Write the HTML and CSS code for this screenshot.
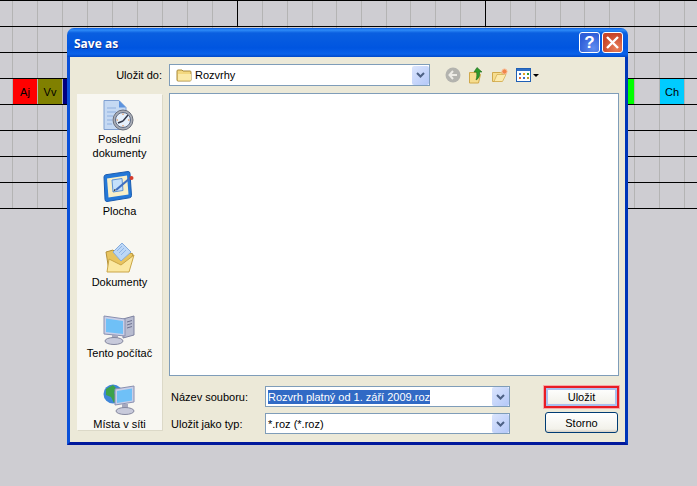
FILE: index.html
```html
<!DOCTYPE html>
<html lang="cs">
<head>
  <meta charset="UTF-8">
  <title>Save as</title>
  <link rel="stylesheet" href="styles.css">
</head>
<body>
  <div class="timetable">
    <div class="row row-head"></div>
    <div class="row"></div>
    <div class="row"></div>
    <div class="row row-subjects">
      <div class="subject subject-aj">Aj</div>
      <div class="subject subject-vv">Vv</div>
      <div class="subject subject-navy"></div>
      <div class="subject subject-green"></div>
      <div class="subject subject-ch">Ch</div>
    </div>
    <div class="row"></div>
    <div class="row"></div>
    <div class="row"></div>
    <div class="row"></div>
  </div>

  <div class="dialog">
    <div class="titlebar">
      <span class="title">Save as</span>
      <div class="title-buttons">
        <div class="title-btn btn-help">?</div>
        <div class="title-btn btn-close">
          <svg width="15" height="15" viewBox="0 0 15 15"><path d="M2 2l11 11M13 2L2 13" stroke="#fff" stroke-width="2.4"/></svg>
        </div>
      </div>
    </div>

    <div class="dialog-body">
      <label class="lookin-label">Uložit do:</label>
      <div class="toolbar">
        <div class="combo combo-lookin">
          <svg class="folder-small" width="16" height="14" viewBox="0 0 16 14">
            <path d="M1 3q0-1 1-1h4l1 1h7q1 0 1 1v8q0 1-1 1H2q-1 0-1-1z" fill="#f3d77f" stroke="#a98a3c"/>
            <path d="M2 6h13v6.500H2z" fill="#fbe9a8"/>
          </svg>
          <span class="combo-text">Rozvrhy</span>
          <div class="combo-arrow"><svg width="9" height="6" viewBox="0 0 9 6"><path d="M1 1l3.500 3.500L8 1" fill="none" stroke="#4d6185" stroke-width="2"/></svg></div>
        </div>
        <div class="tools">
          <svg class="tool tool-back" width="16" height="16" viewBox="0 0 16 16">
            <circle cx="8" cy="8" r="7.500" fill="#b3b3ae"/>
            <path d="M8 4L4.500 8 8 12M5 8h7" fill="none" stroke="#ecebe5" stroke-width="2"/>
          </svg>
          <svg class="tool tool-up" width="15" height="17" viewBox="0 0 15 17">
            <path d="M.5 5.500h7l4 2-2 8.500H.5z" fill="#f6dd8f" stroke="#d0a94b"/>
            <path d="M8 .5l5 4.500h-2.500c.500 4-.500 6.500-3.500 8 1-3 1-5.500.5-8H5z" fill="#2f9a2a" stroke="#1c6b1c" stroke-width=".6"/>
          </svg>
          <svg class="tool tool-new" width="16" height="14" viewBox="0 0 16 14">
            <path d="M.5 4.500h8l3 1-2 8H.5z" fill="#f6dd8f" stroke="#d0a94b"/>
            <path d="M2 13.500l3-7h9l-3.500 7z" fill="#fbeaae" stroke="#d0a94b" stroke-width=".7"/>
            <circle cx="12.500" cy="3.500" r="2.600" fill="#f2854a" stroke="#f7c19c"/>
          </svg>
          <div class="views">
            <svg width="15" height="14" viewBox="0 0 15 14">
              <rect x=".5" y=".5" width="14" height="13" fill="#fff" stroke="#1f5fb5"/>
              <rect x="1" y="1" width="13" height="2" fill="#2f6fc6"/>
              <path d="M3 5h2v2H3z" fill="#3b6fc0"/><path d="M7 5h2v2H7z" fill="#e3a11f"/><path d="M11 5h2v2h-2z" fill="#2e9d3a"/>
              <path d="M3 9h2v2H3z" fill="#e56a2b"/><path d="M7 9h2v2H7z" fill="#3b6fc0"/><path d="M11 9h2v2h-2z" fill="#c09a2a"/>
            </svg>
            <span class="views-arrow"></span>
          </div>
        </div>
      </div>

      <div class="places">
        <div class="place place-recent">
          <svg width="32" height="32" viewBox="0 0 32 32">
            <path d="M1 .5h15l7 7v22H1z" fill="#c5d9f3" stroke="#7f9fd0"/>
            <path d="M16 .5l7 7h-7z" fill="#5d93de"/>
            <path d="M4 8h9M4 12h9M4 16h6M4 20h5M4 24h5" stroke="#8fb0df"/>
            <circle cx="20" cy="20" r="10" fill="#a9adb6" stroke="#6a6f7c"/>
            <circle cx="20" cy="20" r="7.500" fill="#e6f0fb" stroke="#5d6a84"/>
            <path d="M20 21l5-6M20 21l-5 2" stroke="#33394a" stroke-width="1.500"/>
            <path d="M20 13.500V15M20 25v1.500M13.500 20H15M25 20h1.500" stroke="#e0813b"/>
          </svg>
          <span>Poslední<br>dokumenty</span>
        </div>
        <div class="place">
          <svg width="32" height="32" viewBox="0 0 32 32">
            <path d="M1 6q0-2 2-2.300L25 .5q2 0 2 2l1.500 22q0 2-2 2.300L4 30.500q-2 0-2-2z" fill="#2478d8" stroke="#1a5cb0"/>
            <path d="M4 7.500L24 4.500l1.500 19-20 3z" fill="#f8efc8"/>
            <path d="M9 9l10-1.500 1 12-10 1.500z" fill="#c4e0fb" stroke="#5c92d6"/>
            <path d="M13 19l13-11" stroke="#3f6fc0" stroke-width="2.200"/>
            <path d="M13 19l-2.500 1.500 1-2.500z" fill="#222"/>
            <circle cx="28.500" cy="7" r="2" fill="#d63c2c"/>
          </svg>
          <span>Plocha</span>
        </div>
        <div class="place">
          <svg width="32" height="32" viewBox="0 0 32 32">
            <path d="M3 10l7-2 6 6 6-5 8 3-6 17H6z" fill="#e8c45f" stroke="#b3913a"/>
            <path d="M10 10l9-9 9 9-10 9z" fill="#bcd7f7" stroke="#86acdc"/>
            <path d="M14 9l5-5M16 11l5-5M18 13l5-5" stroke="#8fb4e6"/>
            <path d="M4 30l2-13 12 6 13-10-5 17z" fill="#fbe8a2" stroke="#c9a546"/>
          </svg>
          <span>Dokumenty</span>
        </div>
        <div class="place">
          <svg width="32" height="32" viewBox="0 0 32 32">
            <path d="M20 6l11-3v19l-11 3z" fill="#b8bcd0" stroke="#7f83a0"/>
            <path d="M24 9l5-1.500M24 12l5-1.500M24 15l5-1.500" stroke="#6d7190"/>
            <path d="M1 3l21 3v17L1 21z" fill="#c9cfe8" stroke="#8a90b0"/>
            <path d="M3 5.500l17 2.500v13L3 19z" fill="#6fc0f7"/>
            <path d="M9 22h6v6H9z" fill="#a6a9bf"/>
            <ellipse cx="11" cy="28" rx="9" ry="3.500" fill="#c8cadb" stroke="#85889f"/>
          </svg>
          <span>Tento počítač</span>
        </div>
        <div class="place">
          <svg width="32" height="32" viewBox="0 0 32 32">
            <circle cx="10" cy="10" r="9.500" fill="#3f86d8"/>
            <path d="M3 5l7-4 3 3-2 5 3 4-3 6-3-6-5-2z" fill="#3ca24a"/>
            <path d="M12 5l19-3v16l-19 3z" fill="#c9cfe8" stroke="#8a90b0"/>
            <path d="M14 7l15-2.500v12L14 19z" fill="#6fc0f7"/>
            <path d="M19 20h6v6h-6z" fill="#a6a9bf"/>
            <ellipse cx="22" cy="27" rx="9" ry="3.500" fill="#c8cadb" stroke="#85889f"/>
          </svg>
          <span>Místa v síti</span>
        </div>
      </div>

      <div class="main">
        <div class="file-list"></div>
        <div class="form">
          <label>Název souboru:</label>
          <div class="combo">
            <span class="combo-text"><span class="selected">Rozvrh platný od 1. září 2009.roz</span></span>
            <div class="combo-arrow"><svg width="9" height="6" viewBox="0 0 9 6"><path d="M1 1l3.500 3.500L8 1" fill="none" stroke="#4d6185" stroke-width="2"/></svg></div>
          </div>
          <div class="btn-focus"><button class="btn btn-default">Uložit</button></div>
          <label>Uložit jako typ:</label>
          <div class="combo">
            <span class="combo-text">*.roz (*.roz)</span>
            <div class="combo-arrow"><svg width="9" height="6" viewBox="0 0 9 6"><path d="M1 1l3.500 3.500L8 1" fill="none" stroke="#4d6185" stroke-width="2"/></svg></div>
          </div>
          <div class="btn-focus btn-plain"><button class="btn">Storno</button></div>
        </div>
      </div>
    </div>
  </div>
</body>
</html>
```

FILE: styles.css
```css
* {
  margin: 0;
  padding: 0;
  box-sizing: border-box;
}

body {
  width: 697px;
  height: 486px;
  overflow: hidden;
  background-color: #cecdd2;
  font-family: "Liberation Sans", Arial, sans-serif;
  font-size: 11px;
  color: #000;
}

/* timetable behind the dialog */
.timetable {
  --tick: repeating-linear-gradient(to right, transparent 0 24px, #b4b4b4 24px 25px);
  border-top: 1px solid #000;
}

/* the source columns are not a whole number of px wide, so the ticks lose a px here and there */
.row {
  height: 26px;
  border-bottom: 1px solid #000;
  background-image: var(--tick), var(--tick), var(--tick), var(--tick), var(--tick);
  background-size: 250px 100%, 75px 100%, 75px 100%, 175px 100%, 137px 100%;
  background-position: -12px 0, 238px 0, 312px 0, 386px 0, 560px 0;
  background-repeat: no-repeat;
}

.row-head {
  background-image: linear-gradient(#000, #000), linear-gradient(#000, #000), var(--tick), var(--tick), var(--tick), var(--tick), var(--tick);
  background-size: 1px 100%, 1px 100%, 250px 100%, 75px 100%, 75px 100%, 175px 100%, 137px 100%;
  background-position: 237px 0, 485px 0, -12px 0, 238px 0, 312px 0, 386px 0, 560px 0;
}

.row-subjects {
  display: flex;
  gap: 1px;
  padding: 0 13px;
}

.subject {
  width: 24px;
  height: 25px;
  display: flex;
  justify-content: center;
  align-items: center;
}

.subject-aj { background-color: #ff0000; }
.subject-vv { background-color: #808000; }
.subject-navy { background-color: #000080; }
.subject-green { background-color: #00ff00; margin-left: auto; margin-right: 25px; }
.subject-ch { background-color: #00ccff; }

/* dialog */
.dialog {
  position: absolute;
  left: 67px;
  top: 28px;
  width: 561px;
  height: 417px;
  display: flex;
  flex-direction: column;
}

.titlebar {
  height: 29px;
  display: flex;
  justify-content: space-between;
  align-items: center;
  padding: 0 5px 0 7px;
  border-radius: 7px 7px 0 0;
  background: linear-gradient(#0a5ce0 0, #2f8cf8 2px, #0a5fe0 5px, #0055e0 20px, #0a62ea 26px, #0048c8 29px);
}

.title {
  padding-top: 2px;
  font-family: "Open Sans", sans-serif;
  font-weight: 700;
  font-size: 12px;
  color: #fff;
  text-shadow: 1px 1px 0 #0f2f8c;
}

.title-buttons {
  display: flex;
  gap: 2px;
}

.title-btn {
  width: 21px;
  height: 21px;
  border: 1px solid #fff;
  border-radius: 3px;
  display: flex;
  justify-content: center;
  align-items: center;
  color: #fff;
}

.btn-help {
  background: radial-gradient(circle at 70% 80%, #5f8cf0, #2f5fd8 70%);
  font-size: 17px;
  font-weight: 700;
}

.btn-close {
  background: radial-gradient(circle at 70% 80%, #e8805a, #c8452a 70%);
}

.dialog-body {
  flex: 1;
  display: grid;
  grid-template-columns: 85px 450px;
  grid-template-rows: 22px 1fr;
  column-gap: 7px;
  row-gap: 7px;
  padding: 7px 6px 0 7px;
  background-color: #ece9d8;
  border: 3px solid #0a50d8;
  border-top: 0;
  border-right-color: #0036b8;
  border-bottom-color: #00189c;
}

.lookin-label {
  align-self: center;
  text-align: right;
}

.toolbar {
  display: flex;
  align-items: center;
}

.combo {
  height: 21px;
  display: flex;
  align-items: center;
  justify-content: space-between;
  background-color: #fff;
  border: 1px solid #7f9db9;
}

.combo-lookin {
  width: 261px;
  height: 22px;
  justify-content: flex-start;
  padding-left: 6px;
  gap: 3px;
}

.combo-lookin .combo-arrow {
  margin-left: auto;
}

.combo-text {
  padding-left: 2px;
  white-space: nowrap;
}

.combo-lookin .combo-text {
  padding-left: 0;
}

.selected {
  background-color: #316ac5;
  color: #fff;
  padding: 1px 0;
}

.combo-arrow {
  width: 17px;
  height: 19px;
  display: flex;
  justify-content: center;
  align-items: center;
  border-radius: 2px;
  background: linear-gradient(135deg, #dbe5fd, #b4c8f8);
}

.tools {
  display: flex;
  align-items: center;
  margin-left: 15px;
  gap: 8px;
}

.views {
  display: flex;
  align-items: center;
  gap: 2px;
}

.views-arrow {
  width: 0;
  height: 0;
  border-left: 3px solid transparent;
  border-right: 3px solid transparent;
  border-top: 3px solid #000;
}

.places {
  display: flex;
  flex-direction: column;
  height: 336px;
  margin-top: 1px;
  overflow: hidden;
  padding-top: 6px;
  background-color: #f8f7f2;
  box-shadow: 1px 1px 0 #dcd9c8;
}

.place {
  flex: 0 0 71px;
  display: flex;
  flex-direction: column;
  align-items: center;
  text-align: center;
  line-height: 14px;
  gap: 1px;
}

.place svg {
  margin-left: -2px;
}

.place-recent {
  gap: 0;
}

.main {
  display: flex;
  flex-direction: column;
}

.file-list {
  height: 283px;
  background-color: #fff;
  border: 1px solid #7f9db9;
}

.form {
  display: grid;
  grid-template-columns: 96px 245px 1fr;
  grid-template-rows: 21px 21px;
  row-gap: 6px;
  margin-top: 10px;
  align-items: center;
}

.form label {
  padding-left: 2px;
}

.btn-focus {
  justify-self: end;
  width: 77px;
  height: 24px;
  margin-right: -1px;
  padding: 3px;
  background-color: #e81c24;
  outline: 1px solid #f8a8a8;
  outline-offset: -1px;
}

.btn-plain {
  background: none;
  outline: 0;
  height: 21px;
  margin-top: -2px;
  padding: 0 2px;
}

.btn {
  display: block;
  width: 100%;
  height: 100%;
  font-family: inherit;
  font-size: 11px;
  color: #000;
  border: 1px solid #003c74;
  border-radius: 3px;
  background: linear-gradient(#fff, #f2f1ea 85%, #d6d0c5);
}

.btn-default {
  border: 0;
  border-radius: 0;
  box-shadow: inset 0 0 0 2px #a9bfee;
}
```
